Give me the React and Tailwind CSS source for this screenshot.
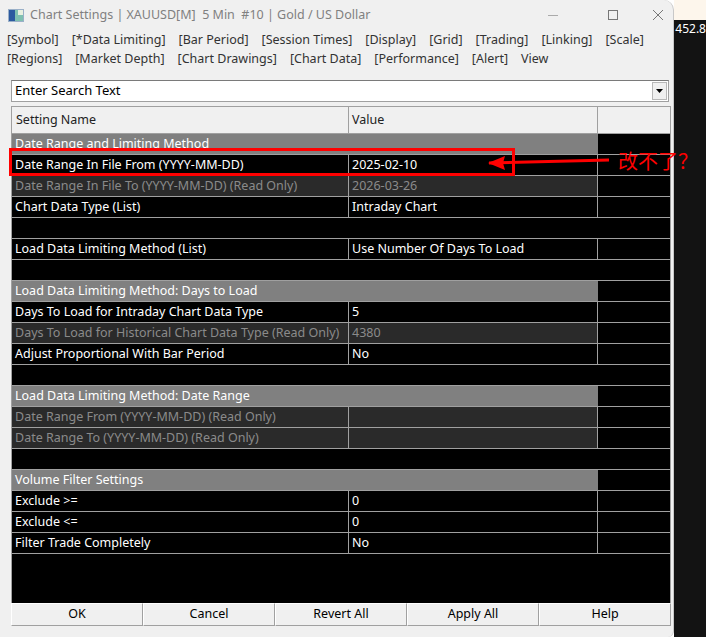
import React from 'react';

const tabs1 = ['[Symbol]', '[*Data Limiting]', '[Bar Period]', '[Session Times]', '[Display]', '[Grid]', '[Trading]', '[Linking]', '[Scale]'];
const tabs2 = ['[Regions]', '[Market Depth]', '[Chart Drawings]', '[Chart Data]', '[Performance]', '[Alert]', 'View'];

const rows = [
  { type: 'section', name: 'Date Range and Limiting Method' },
  { type: 'row', name: 'Date Range In File From (YYYY-MM-DD)', value: '2025-02-10' },
  { type: 'ro', name: 'Date Range In File To (YYYY-MM-DD) (Read Only)', value: '2026-03-26' },
  { type: 'row', name: 'Chart Data Type (List)', value: 'Intraday Chart' },
  { type: 'empty' },
  { type: 'row', name: 'Load Data Limiting Method (List)', value: 'Use Number Of Days To Load' },
  { type: 'empty' },
  { type: 'section', name: 'Load Data Limiting Method: Days to Load' },
  { type: 'row', name: 'Days To Load for Intraday Chart Data Type', value: '5' },
  { type: 'ro', name: 'Days To Load for Historical Chart Data Type (Read Only)', value: '4380' },
  { type: 'row', name: 'Adjust Proportional With Bar Period', value: 'No' },
  { type: 'empty' },
  { type: 'section', name: 'Load Data Limiting Method: Date Range' },
  { type: 'ro', name: 'Date Range From (YYYY-MM-DD) (Read Only)', value: '' },
  { type: 'ro', name: 'Date Range To (YYYY-MM-DD) (Read Only)', value: '' },
  { type: 'empty' },
  { type: 'section', name: 'Volume Filter Settings' },
  { type: 'row', name: 'Exclude >=', value: '0' },
  { type: 'row', name: 'Exclude <=', value: '0' },
  { type: 'row', name: 'Filter Trade Completely', value: 'No' },
];

function Row({ r }) {
  if (r.type === 'empty') {
    return <div className="h-[21px] bg-black border-b border-[#a0a0a0]"></div>;
  }
  if (r.type === 'section') {
    return (
      <div className="h-[21px] flex border-b border-[#a0a0a0]">
        <div className="w-[586px] bg-[#808080] text-white pl-[3px] leading-[20px] truncate">{r.name}</div>
        <div className="flex-1 bg-black"></div>
      </div>
    );
  }
  const ro = r.type === 'ro';
  return (
    <div className="h-[21px] flex border-b border-[#a0a0a0] bg-black">
      <div className={`w-[337px] border-r border-[#a0a0a0] pl-[3px] leading-[20px] truncate ${ro ? 'bg-[#2a2a2a] text-[#8a8a8a]' : 'text-white'}`}>{r.name}</div>
      <div className={`w-[249px] border-r border-[#a0a0a0] pl-[3px] leading-[20px] truncate ${ro ? 'bg-[#2a2a2a] text-[#8a8a8a]' : 'text-white'}`}>{r.value}</div>
      <div className="flex-1"></div>
    </div>
  );
}

export default function App() {
  return (
    <div className="relative w-[706px] h-[637px] flex overflow-hidden" style={{ fontFamily: '"Noto Sans", "Liberation Sans", sans-serif' }}>
      <div className="w-[682px] h-full flex flex-col bg-[#f0f0f0] rounded-tr-[10px] rounded-br-[6px] border-r border-[#c8c8c8]">
        {/* title bar */}
        <div className="h-[30px] flex items-center">
          <svg width="16" height="13" viewBox="0 0 16 13" className="ml-[8px] mt-[1px]">
            <rect x="0" y="0" width="16" height="13" fill="#9ab0c8" />
            <rect x="1" y="1" width="6" height="11" fill="#2c5aa0" />
            <rect x="7" y="1" width="8" height="11" fill="#7fc0b0" />
            <rect x="10" y="1" width="5" height="5" fill="#e8f0e0" />
          </svg>
          <span className="ml-[6px] text-[12.5px] text-[#808080] whitespace-pre">Chart Settings | XAUUSD[M]  5 Min  #10 | Gold / US Dollar</span>
          <div className="flex-1"></div>
          <svg width="12" height="12" viewBox="0 0 12 12" className="mr-[48px]">
            <line x1="1" y1="6.5" x2="11" y2="6.5" stroke="#aaa" strokeWidth="1" />
          </svg>
          <svg width="12" height="12" viewBox="0 0 12 12" className="mr-[33px]">
            <rect x="1.5" y="1.5" width="9" height="9" fill="none" stroke="#777" strokeWidth="1" />
          </svg>
          <svg width="12" height="12" viewBox="0 0 12 12" className="mr-[9px]">
            <path d="M1 1 L11 11 M11 1 L1 11" stroke="#777" strokeWidth="1" />
          </svg>
        </div>
        {/* tabs */}
        <div className="pl-[7px] text-[12.5px] text-[#333] leading-[19px]">
          <div className="flex gap-[13px] whitespace-nowrap">
            {tabs1.map((t) => <span key={t}>{t}</span>)}
          </div>
          <div className="flex gap-[13px] whitespace-nowrap">
            {tabs2.map((t) => <span key={t}>{t}</span>)}
          </div>
        </div>
        {/* search */}
        <div className="mt-[12px] ml-[11px] w-[658px] h-[22px] bg-white border border-[#a0a0a0] border-t-[#7a7a7a] flex items-center text-[13px] text-black">
          <span className="pl-[3px] flex-1">Enter Search Text</span>
          <div className="w-[15px] h-[18px] mr-[1px] bg-[#f0f0f0] border border-[#b8b8b8] flex items-center justify-center">
            <svg width="7" height="4" viewBox="0 0 7 4"><path d="M0 0 L7 0 L3.5 4 Z" fill="#000" /></svg>
          </div>
        </div>
        {/* table */}
        <div className="mt-[4px] ml-[11px] w-[660px] h-[497px] flex flex-col bg-black border-l border-r border-t border-[#a0a0a0] text-[12.5px]">
          <div className="h-[27px] flex bg-[#f0f0f0] border-b border-[#a0a0a0] text-[#222]">
            <div className="w-[337px] border-r border-[#a0a0a0] pl-[4px] leading-[26px]">Setting Name</div>
            <div className="w-[249px] border-r border-[#a0a0a0] pl-[3px] leading-[26px]">Value</div>
            <div className="flex-1"></div>
          </div>
          {rows.map((r, i) => <Row key={i} r={r} />)}
          <div className="flex-1 bg-black"></div>
        </div>
        {/* buttons */}
        <div className="ml-[11px] w-[660px] h-[23px] flex text-[12.5px] text-black">
          {['OK', 'Cancel', 'Revert All', 'Apply All', 'Help'].map((b) => (
            <div key={b} className="flex-1 bg-[#f0f0f0] border border-[#a0a0a0] border-t-white border-l-white flex items-center justify-center">{b}</div>
          ))}
        </div>
      </div>
      {/* right side background */}
      <div className="flex-1 flex flex-col">
        <div className="h-[20px] bg-[#fdf6ec]"></div>
        <div className="flex-1 bg-[#131313] text-white text-[12px] leading-[16px] pt-[1px] pl-[1px] whitespace-nowrap overflow-hidden">452.8</div>
      </div>
      {/* annotation */}
      <div className="absolute left-[9px] top-[148px] w-[506px] h-[28px] border-[3px] border-[#ff0000]"></div>
      <svg className="absolute left-[485px] top-[152px]" width="130" height="22" viewBox="0 0 130 22">
        <path d="M4 11 L124 8" stroke="#ff0000" strokeWidth="3" fill="none" />
        <path d="M3 11 L20 4 L18 11 L20 18 Z" fill="#ff0000" />
      </svg>
      <div className="absolute left-[618px] top-[148px] text-[20px] leading-[26px] text-[#ff0000] whitespace-nowrap" style={{ fontFamily: '"Noto Sans CJK SC", sans-serif' }}>改不了？</div>
    </div>
  );
}
